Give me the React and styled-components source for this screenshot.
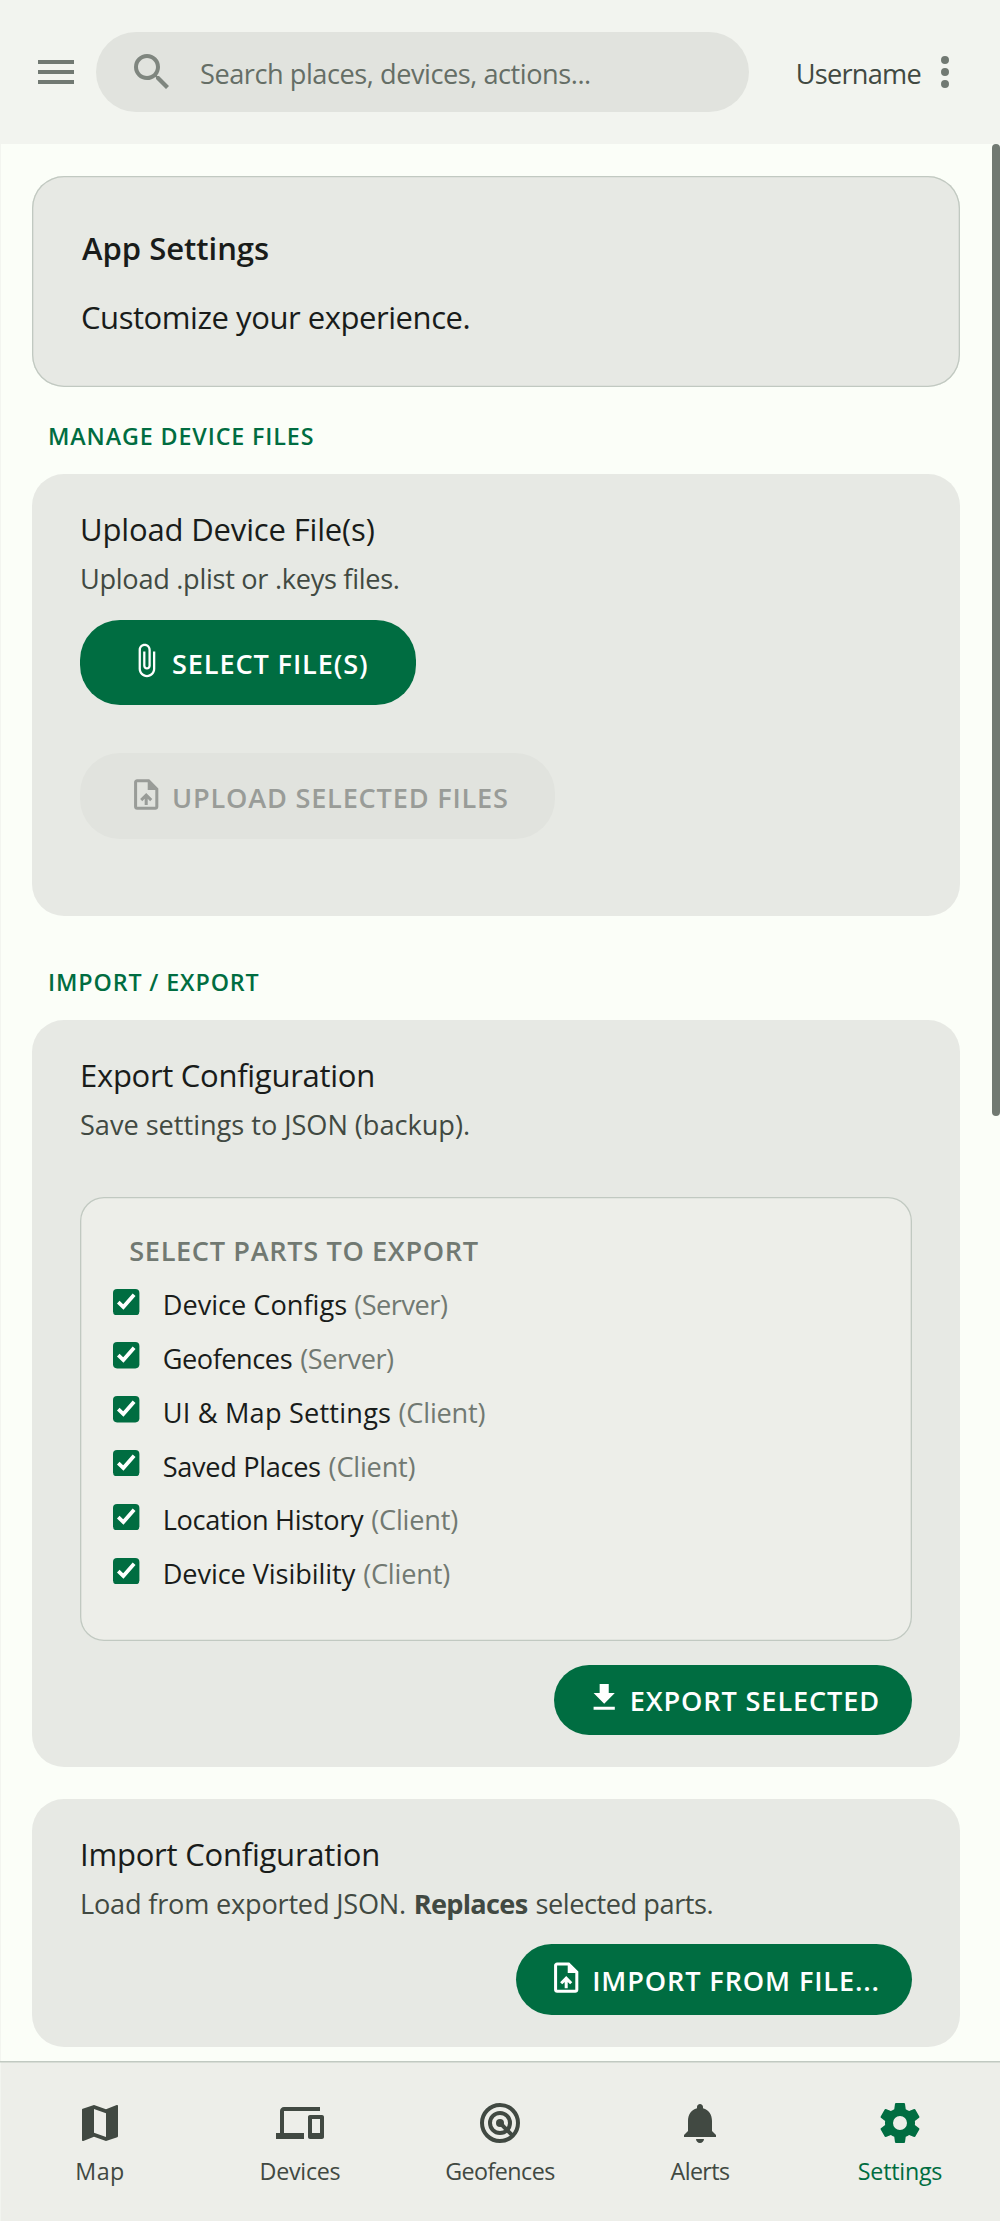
import React from 'react';
import styled, { createGlobalStyle } from 'styled-components';

const c = {
  surface: '#fbfef8',
  low: '#f2f4ef',
  container: '#edeee9',
  high: '#e7e9e4',
  highest: '#e1e3de',
  primary: '#006d41',
  text: '#191c1a',
  variant: '#414942',
  outline: '#717972',
  outlineVariant: '#c1c9c1',
};

const GlobalStyle = createGlobalStyle`
  * { box-sizing: border-box; }
  body {
    margin: 0;
    background: ${c.surface};
    color: ${c.text};
    font-family: "Open Sans", "Noto Sans", sans-serif;
    font-variant-ligatures: none;
  }
`;

const Page = styled.div`
  display: flex;
  flex-direction: column;
  height: 2221px;
  overflow: hidden;
`;

const Icon = styled.svg`
  display: block;
  flex: none;
  width: ${(p) => p.$size || 48}px;
  height: ${(p) => p.$size || 48}px;
  fill: currentColor;
  transform: translateY(${(p) => p.$shift || 0}px);
`;

const Header = styled.header`
  flex: none;
  display: flex;
  align-items: center;
  height: 144px;
  padding: 0 31px 0 32px;
  background: ${c.low};
  color: ${c.outline};
`;

const SearchBar = styled.div`
  display: flex;
  align-items: center;
  width: 653px;
  height: 80px;
  margin-left: 16px;
  padding-left: 32px;
  border-radius: 40px;
  background: ${c.highest};
`;

const SearchIcon = styled(Icon)`
  opacity: 0.87;
`;

const Placeholder = styled.span`
  margin-left: 24px;
  padding-top: 4px;
  font-size: 27.16px;
  letter-spacing: -0.46px;
  line-height: 40px;
  color: #656e66;
`;

const Username = styled.span`
  margin-left: auto;
  padding-top: 4px;
  font-size: 27.16px;
  letter-spacing: -0.75px;
  line-height: 40px;
  color: ${c.variant};
`;

const Main = styled.main`
  position: relative;
  flex: none;
  height: 1917px;
  padding: 32px 40px 0 31px;
  border-left: 1px solid #f3f5f0;
`;

const ScrollThumb = styled.div`
  position: absolute;
  top: 0;
  right: 0;
  width: 8px;
  height: 972px;
  border-radius: 4px;
  background: ${c.outline};
`;

const IntroCard = styled.section`
  height: 211px;
  padding: 48px 48px 0 50px;
  border-radius: 32px;
  background: ${c.high};
  box-shadow: inset 0 0 0 1.33px ${c.outlineVariant};
`;

const IntroTitle = styled.h1`
  margin: 0;
  font-size: 31.04px;
  font-weight: 600;
  letter-spacing: -0.02px;
  line-height: 48px;
`;

const IntroText = styled.p`
  margin: 21px 0 0 -1px;
  font-size: 31.04px;
  letter-spacing: -0.46px;
  line-height: 48px;
`;

const SectionLabel = styled.h2`
  margin: ${(p) => p.$top}px 0 22px 16px;
  font-size: 23.28px;
  font-weight: 600;
  letter-spacing: 0.88px;
  line-height: 32px;
  color: ${c.primary};
`;

const Card = styled.section`
  display: flex;
  flex-direction: column;
  height: ${(p) => p.$height}px;
  margin-top: ${(p) => p.$top || 0}px;
  padding: 31px 48px 0;
  border-radius: 32px;
  background: ${c.high};
`;

const CardTitle = styled.h3`
  margin: 0;
  font-size: 31.04px;
  font-weight: 400;
  letter-spacing: ${(p) => p.$track}px;
  line-height: 48px;
`;

const CardText = styled.p`
  margin: 5.5px 0 0;
  font-size: 27.16px;
  letter-spacing: ${(p) => p.$track}px;
  line-height: 40px;
  color: ${c.variant};
`;

const Strong = styled.strong`
  margin: 0 0.8px;
  font-weight: 700;
  letter-spacing: -0.69px;
`;

const Tail = styled.span`
  margin-left: 0.6px;
  letter-spacing: -0.45px;
`;

const ButtonBase = styled.button`
  flex: none;
  display: flex;
  align-items: center;
  gap: 7.6px;
  margin: 0;
  border: 0;
  font-family: inherit;
  font-size: 27.16px;
  font-weight: 600;
  line-height: 40px;
  letter-spacing: ${(p) => p.$track}px;
  white-space: nowrap;
  width: ${(p) => p.$width}px;
  background: ${(p) => (p.disabled ? c.highest : c.primary)};
  color: ${(p) => (p.disabled ? '#999c98' : '#fff')};
`;

const LargeButton = styled(ButtonBase)`
  height: 85.6px;
  margin-top: ${(p) => p.$top}px;
  padding: 4px 0 0 48px;
  border-radius: 40px;
`;

const ActionButton = styled(ButtonBase)`
  align-self: flex-end;
  height: 70.5px;
  margin-top: ${(p) => p.$top}px;
  padding: 2.6px 0 0 32px;
  border-radius: 36px;
`;

const PartsBox = styled.div`
  flex: none;
  height: 443.5px;
  margin-top: 52.5px;
  padding: 33.5px 0 0 33.3px;
  border-radius: 24px;
  background: ${c.container};
  box-shadow: inset 0 0 0 1.33px ${c.outlineVariant};
`;

const PartsHeading = styled.h4`
  margin: 0 0 4.4px 16px;
  font-size: 27.16px;
  font-weight: 600;
  letter-spacing: 0.63px;
  line-height: 40px;
  color: ${c.outline};
`;

const PartRow = styled.label`
  display: flex;
  align-items: center;
  height: 53.8px;
`;

const CheckBox = styled.svg`
  flex: none;
  width: 26.4px;
  height: 26.4px;
  margin-right: 23px;
`;

const PartName = styled.span`
  padding-top: 7px;
  font-size: 27.16px;
  letter-spacing: ${(p) => p.$track}px;
  line-height: 40px;
  white-space: pre;
`;

const PartScope = styled.span`
  margin-left: ${(p) => p.$gap}px;
  color: ${c.outline};
  letter-spacing: ${(p) => p.$track}px;
`;

const Nav = styled.nav`
  flex: none;
  display: grid;
  grid-template-columns: repeat(5, 200px);
  height: 160px;
  background: ${c.container};
  box-shadow: inset 0 1.4px 0 ${c.outlineVariant}, inset 1px 0 0 ${c.low};
`;

const NavItem = styled.a`
  display: flex;
  flex-direction: column;
  align-items: center;
  gap: 8px;
  padding-top: 38px;
  font-size: 23.28px;
  letter-spacing: ${(p) => p.$track}px;
  line-height: 32px;
  color: ${(p) => (p.$active ? c.primary : c.variant)};
`;

const paths = {
  menu: 'M3,6H21V8H3V6M3,11H21V13H3V11M3,16H21V18H3V16Z',
  search:
    'M9.5,3A6.5,6.5 0 0,1 16,9.5C16,11.11 15.41,12.59 14.44,13.73L14.71,14H15.5L20.5,19L19,20.5L14,15.5V14.71L13.73,14.44C12.59,15.41 11.11,16 9.5,16A6.5,6.5 0 0,1 3,9.5A6.5,6.5 0 0,1 9.5,3M9.5,5C7,5 5,7 5,9.5C5,12 7,14 9.5,14C12,14 14,12 14,9.5C14,7 12,5 9.5,5Z',
  more: 'M12 8a2 2 0 1 0 0-4 2 2 0 0 0 0 4zm0 2a2 2 0 1 0 0 4 2 2 0 0 0 0-4zm0 6a2 2 0 1 0 0 4 2 2 0 0 0 0-4z',
  attach:
    'M16.5 6v11.5c0 2.21-1.79 4-4 4s-4-1.79-4-4V5c0-1.38 1.12-2.5 2.5-2.5s2.5 1.12 2.5 2.5v10.5c0 .55-.45 1-1 1s-1-.45-1-1V6H10v9.5c0 1.38 1.12 2.5 2.5 2.5s2.5-1.12 2.5-2.5V5c0-2.21-1.79-4-4-4S7 2.79 7 5v12.5c0 3.04 2.46 5.5 5.5 5.5s5.5-2.46 5.5-5.5V6h-1.5z',
  upload:
    'M14 2H6c-1.1 0-1.99.9-1.99 2L4 20c0 1.1.89 2 1.99 2H18c1.1 0 2-.9 2-2V8l-6-6zm4 18H6V4h7v5h5v11zM8 15.01l1.41 1.41L11 14.84V19h2v-4.16l1.59 1.59L16 15.01 12.01 11 8 15.01z',
  download: 'M19 9h-4V3H9v6H5l7 7 7-7zM5 18v2h14v-2H5z',
  map: 'M20.5 3l-.16.03L15 5.1 9 3 3.36 4.9c-.21.07-.36.25-.36.48V20.5c0 .28.22.5.5.5l.16-.03L9 18.9l6 2.1 5.64-1.9c.21-.07.36-.25.36-.48V3.5c0-.28-.22-.5-.5-.5zM15 19l-6-2.11V5l6 2.11V19z',
  devices:
    'M4 6h18V4H4c-1.1 0-2 .9-2 2v11H0v3h14v-3H4V6zm19 2h-6c-.55 0-1 .45-1 1v10c0 .55.45 1 1 1h6c.55 0 1-.45 1-1V9c0-.55-.45-1-1-1zm-1 9h-4v-7h4v7z',
  bell: 'M12 22c1.1 0 2-.9 2-2h-4c0 1.1.89 2 2 2zm6-6v-5c0-3.07-1.64-5.64-4.5-6.32V4c0-.83-.67-1.5-1.5-1.5s-1.5.67-1.5 1.5v.68C7.63 5.36 6 7.92 6 11v5l-2 2v1h16v-1l-2-2z',
  cog: 'M12,15.5A3.5,3.5 0 0,1 8.5,12A3.5,3.5 0 0,1 12,8.5A3.5,3.5 0 0,1 15.5,12A3.5,3.5 0 0,1 12,15.5M19.43,12.97C19.47,12.65 19.5,12.33 19.5,12C19.5,11.67 19.47,11.34 19.43,11L21.54,9.37C21.73,9.22 21.78,8.95 21.66,8.73L19.66,5.27C19.54,5.05 19.27,4.96 19.05,5.05L16.56,6.05C16.04,5.66 15.5,5.32 14.87,5.07L14.5,2.42C14.46,2.18 14.25,2 14,2H10C9.75,2 9.54,2.18 9.5,2.42L9.13,5.07C8.5,5.32 7.96,5.66 7.44,6.05L4.95,5.05C4.73,4.96 4.46,5.05 4.34,5.27L2.34,8.73C2.21,8.95 2.27,9.22 2.46,9.37L4.57,11C4.53,11.34 4.5,11.67 4.5,12C4.5,12.33 4.53,12.65 4.57,12.97L2.46,14.63C2.27,14.78 2.21,15.05 2.34,15.27L4.34,18.73C4.46,18.95 4.73,19.03 4.95,18.95L7.44,17.94C7.96,18.34 8.5,18.68 9.13,18.93L9.5,21.58C9.54,21.82 9.75,22 10,22H14C14.25,22 14.46,21.82 14.5,21.58L14.87,18.93C15.5,18.67 16.04,18.34 16.56,17.94L19.05,18.95C19.27,19.03 19.54,18.95 19.66,18.73L21.66,15.27C21.78,15.05 21.73,14.78 21.54,14.63L19.43,12.97Z',
};

const Glyph = ({ name, as: Comp = Icon, ...rest }) => (
  <Comp viewBox="0 0 24 24" aria-hidden="true" {...rest}>
    <path d={paths[name]} />
  </Comp>
);

const TargetGlyph = () => (
  <Icon viewBox="0 0 24 24" aria-hidden="true">
    <g fill="none" stroke="currentColor" strokeWidth="2">
      <circle cx="12" cy="12" r="9" />
      <circle cx="12" cy="12" r="5" />
      <path d="M12 12l6.4 6.4" />
    </g>
    <circle cx="12" cy="12" r="2" />
  </Icon>
);

const Checked = () => (
  <CheckBox viewBox="0 0 26 26" role="checkbox" aria-checked="true">
    <rect width="26" height="26" rx="4" fill={c.primary} />
    <path d="M5.2 13l5 4.8L20.8 5.6" fill="none" stroke="#fff" strokeWidth="3.7" />
  </CheckBox>
);

const parts = [
  { name: 'Device Configs', track: 0, scope: '(Server)' },
  { name: 'Geofences', track: -0.46, scope: '(Server)', gap: 1.6 },
  { name: 'UI & Map Settings', track: 0.2, scope: '(Client)' },
  { name: 'Saved Places', track: -0.33, scope: '(Client)', gap: 1.2 },
  { name: 'Location History', track: -0.32, scope: '(Client)', gap: 1.2 },
  { name: 'Device Visibility', track: -0.09, scope: '(Client)', gap: 1 },
];

const tabs = [
  { label: 'Map', icon: 'map', track: 0.4 },
  { label: 'Devices', icon: 'devices', track: -0.27 },
  { label: 'Geofences', icon: 'target', track: -0.54 },
  { label: 'Alerts', icon: 'bell', track: -0.6 },
  { label: 'Settings', icon: 'cog', track: -0.24, active: true },
];

export default function App() {
  return (
    <Page>
      <GlobalStyle />
      <Header>
        <Glyph name="menu" />
        <SearchBar>
          <Glyph name="search" as={SearchIcon} />
          <Placeholder>Search places, devices, actions...</Placeholder>
        </SearchBar>
        <Username>Username</Username>
        <Glyph name="more" />
      </Header>

      <Main>
        <IntroCard>
          <IntroTitle>App Settings</IntroTitle>
          <IntroText>Customize your experience.</IntroText>
        </IntroCard>

        <SectionLabel $top={33}>MANAGE DEVICE FILES</SectionLabel>
        <Card $height={442}>
          <CardTitle $track={-0.17}>Upload Device File(s)</CardTitle>
          <CardText $track={-0.3}>Upload .plist or .keys files.</CardText>
          <LargeButton $width={335.6} $top={21} $track={0.86}>
            <Glyph name="attach" $size={36.4} $shift={-3.7} />
            SELECT FILE(S)
          </LargeButton>
          <LargeButton $width={475} $top={48.4} $track={0.79} disabled>
            <Glyph name="upload" $size={36.4} $shift={-3.7} />
            UPLOAD SELECTED FILES
          </LargeButton>
        </Card>

        <SectionLabel $top={50}>IMPORT / EXPORT</SectionLabel>
        <Card $height={747}>
          <CardTitle $track={-0.3}>Export Configuration</CardTitle>
          <CardText $track={-0.03}>Save settings to JSON (backup).</CardText>
          <PartsBox>
            <PartsHeading>SELECT PARTS TO EXPORT</PartsHeading>
            {parts.map((p) => (
              <PartRow key={p.name}>
                <Checked />
                <PartName $track={p.track}>
                  {p.name}{' '}
                  <PartScope $gap={p.gap || 0} $track={p.scope === '(Server)' ? -0.5 : -0.2}>
                    {p.scope}
                  </PartScope>
                </PartName>
              </PartRow>
            ))}
          </PartsBox>
          <ActionButton $width={358.3} $top={24.2} $track={0.86}>
            <Glyph name="download" $size={36.4} $shift={-3.6} />
            EXPORT SELECTED
          </ActionButton>
        </Card>

        <Card $height={247.7} $top={32}>
          <CardTitle $track={-0.24}>Import Configuration</CardTitle>
          <CardText $track={-0.21}>
            Load from exported JSON. <Strong>Replaces</Strong>
            <Tail> selected parts.</Tail>
          </CardText>
          <ActionButton $width={395.8} $top={20.6} $track={0.86}>
            <Glyph name="upload" $size={36.4} $shift={-2.6} />
            IMPORT FROM FILE...
          </ActionButton>
        </Card>
        <ScrollThumb />
      </Main>

      <Nav>
        {tabs.map((t) => (
          <NavItem key={t.label} $active={t.active} $track={t.track}>
            {t.icon === 'target' ? <TargetGlyph /> : <Glyph name={t.icon} />}
            {t.label}
          </NavItem>
        ))}
      </Nav>
    </Page>
  );
}
